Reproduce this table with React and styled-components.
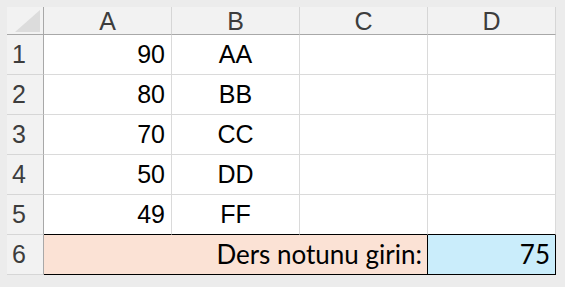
import React from "react";
import styled, { createGlobalStyle } from "styled-components";

const Global = createGlobalStyle`
  html, body { margin: 0; padding: 0; background: #ececec; }
  body { width: 565px; height: 287px; overflow: hidden; }
`;

const Page = styled.div`
  padding: 7px 0 0 7px;
  font-family: "Liberation Sans", Arial, sans-serif;
`;

const Sheet = styled.div`
  display: grid;
  grid-template-columns: 37px repeat(4, 128px);
  grid-template-rows: 28px repeat(6, 40px);
  width: max-content;
  background: #ffffff;
`;

const Corner = styled.div`
  background: #f2f2f2;
  border-right: 1px solid #a8a8a8;
  border-bottom: 1px solid #a8a8a8;
  box-sizing: border-box;
  overflow: hidden;
  svg { display: block; }
`;

const ColHead = styled.div`
  display: flex;
  align-items: center;
  justify-content: center;
  background: #f2f2f2;
  color: #3d3d3d;
  font-size: 25px;
  border-right: 1px solid #d6d6d6;
  border-bottom: 1px solid #a8a8a8;
  box-sizing: border-box;
  padding-top: 2px;
`;

const RowHead = styled.div`
  display: flex;
  align-items: center;
  padding-left: 5px;
  background: #f2f2f2;
  color: #3d3d3d;
  font-size: 25px;
  border-right: 1px solid #a8a8a8;
  border-bottom: 1px solid #d6d6d6;
  box-sizing: border-box;
`;

const Cell = styled.div`
  display: flex;
  align-items: center;
  justify-content: ${(p) => (p.$align === "center" ? "center" : p.$align === "right" ? "flex-end" : "flex-start")};
  padding: 0 6px;
  color: #000;
  font-size: 25px;
  border-right: 1px solid #dadada;
  border-bottom: 1px solid ${(p) => (p.$dark ? "#000" : "#dadada")};
  box-sizing: border-box;
`;

const InputLabel = styled.div`
  grid-column: span 3;
  display: flex;
  align-items: center;
  justify-content: flex-end;
  padding: 0 5px 2px 0;
  background: #fbe2d5;
  color: #000;
  font-family: Lato, "Open Sans", sans-serif;
  font-size: 26px;
  border-right: 1px solid #000;
  border-bottom: 1px solid #000;
  box-sizing: border-box;
`;

const InputValue = styled(InputLabel)`
  grid-column: span 1;
  background: #caedfb;
  padding-right: 5px;
`;

const rows = [
  [90, "AA"],
  [80, "BB"],
  [70, "CC"],
  [50, "DD"],
  [49, "FF"],
];

export default function App() {
  return (
    <>
      <Global />
      <Page>
        <Sheet>
          <Corner>
            <svg width="36" height="27" viewBox="0 0 36 27">
              <polygon points="33,3 33,25 8,25" fill="#dcdcdc" />
            </svg>
          </Corner>
          {["A", "B", "C", "D"].map((c) => (
            <ColHead key={c}>{c}</ColHead>
          ))}
          {rows.map(([score, grade], i) => (
            <React.Fragment key={i}>
              <RowHead>{i + 1}</RowHead>
              <Cell $align="right" $dark={i === 4}>{score}</Cell>
              <Cell $align="center" $dark={i === 4}>{grade}</Cell>
              <Cell $dark={i === 4} />
              <Cell $dark={i === 4} />
            </React.Fragment>
          ))}
          <RowHead>6</RowHead>
          <InputLabel>Ders notunu girin:</InputLabel>
          <InputValue>75</InputValue>
        </Sheet>
      </Page>
    </>
  );
}
